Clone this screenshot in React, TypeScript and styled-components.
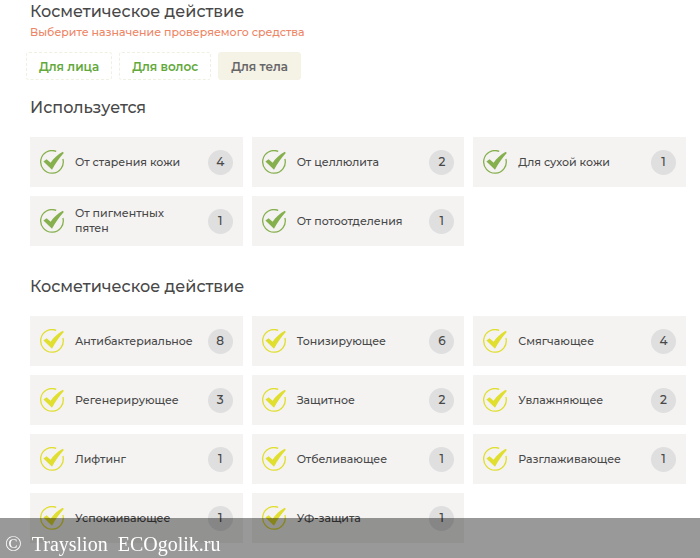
import React from "react";
import styled, { createGlobalStyle } from "styled-components";

const GlobalStyle = createGlobalStyle`
  * { box-sizing: border-box; }
  body {
    margin: 0;
    background: #fff;
    color: #484848;
    font-family: Montserrat, Inter, sans-serif;
  }
`;

const Page = styled.main`
  padding: 0 14px 14px 30px;
`;

const Heading = styled.h2`
  margin: 0;
  font-size: 16px;
  line-height: 24px;
  font-weight: 500;
`;

const Hint = styled.p`
  margin: 0;
  font-size: 11px;
  line-height: 16px;
  font-weight: 500;
  color: #ee8565;
`;

const Tabs = styled.div`
  display: flex;
  gap: 7px;
  margin: 12px 0 16px -4px;
`;

const Tab = styled.button<{ $active?: boolean }>`
  height: 28px;
  padding: 0 12px;
  border: 1px ${(p) => (p.$active ? "solid #f5f2e6" : "dashed #edf1e2")};
  border-radius: 3px;
  background: ${(p) => (p.$active ? "#f5f2e6" : "#fff")};
  color: ${(p) => (p.$active ? "#666" : "#62a83a")};
  font-family: inherit;
  font-size: 12px;
  font-weight: 600;
  cursor: pointer;
`;

const Section = styled.section`
  & + & {
    margin-top: 29px;
  }
`;

const Grid = styled.ul`
  display: grid;
  grid-template-columns: repeat(3, minmax(0, 1fr));
  grid-auto-rows: minmax(50px, auto);
  gap: 9px;
  margin: 17px 0 0;
  padding: 0;
  list-style: none;
`;

const Card = styled.li`
  display: flex;
  align-items: center;
  padding: 8px 10px;
  background: #f4f3f2;
`;

const Mark = styled.svg`
  flex: none;
  width: 24px;
  height: 24px;
  margin-right: 11px;
`;

const Label = styled.span`
  flex: 1;
  min-width: 0;
  padding-right: 8px;
  font-size: 11px;
  font-weight: 500;
  line-height: 15px;
  white-space: pre-line;
`;

const Count = styled.span`
  flex: none;
  width: 25px;
  height: 25px;
  border-radius: 50%;
  background: #dfdfdf;
  font-size: 12px;
  font-weight: 500;
  line-height: 24px;
  text-align: center;
`;

const Watermark = styled.footer`
  position: fixed;
  left: 0;
  right: 0;
  bottom: 0;
  display: flex;
  align-items: center;
  gap: 10px;
  height: 40px;
  padding: 12px 5px 0;
  background: rgba(0, 0, 0, 0.4);
  color: #fff;
  font-family: "Liberation Serif", serif;
  font-size: 20px;
  white-space: pre;
`;

const CopySign = styled.span`
  font-size: 22px;
`;

type Item = { name: string; count: number };

const usedFor: Item[] = [
  { name: "От старения кожи", count: 4 },
  { name: "От целлюлита", count: 2 },
  { name: "Для сухой кожи", count: 1 },
  { name: "От пигментных\nпятен", count: 1 },
  { name: "От потоотделения", count: 1 },
];

const actions: Item[] = [
  { name: "Антибактериальное", count: 8 },
  { name: "Тонизирующее", count: 6 },
  { name: "Смягчающее", count: 4 },
  { name: "Регенерирующее", count: 3 },
  { name: "Защитное", count: 2 },
  { name: "Увлажняющее", count: 2 },
  { name: "Лифтинг", count: 1 },
  { name: "Отбеливающее", count: 1 },
  { name: "Разглаживающее", count: 1 },
  { name: "Успокаивающее", count: 1 },
  { name: "УФ-защита", count: 1 },
];

const CheckMark = ({ color }: { color: string }) => (
  <Mark viewBox="0 0 24 24" aria-hidden="true">
    <path
      d="M16.2 1.4A11.3 11.3 0 1 0 22.9 9"
      fill="none"
      stroke={color}
      strokeWidth="1.3"
    />
    <path
      d="M3.4 11.6 6.6 9.2 10.6 12.8C13.6 8.2 17.6 4.8 22.8 1.8L23.8 3C19.4 7.8 15.6 13 12 19.8Z"
      fill={color}
    />
  </Mark>
);

const CardList = ({ items, color }: { items: Item[]; color: string }) => (
  <Grid>
    {items.map((item) => (
      <Card key={item.name}>
        <CheckMark color={color} />
        <Label>{item.name}</Label>
        <Count>{item.count}</Count>
      </Card>
    ))}
  </Grid>
);

export default function App() {
  return (
    <>
      <GlobalStyle />
      <Page>
        <Heading as="h1">Косметическое действие</Heading>
        <Hint>Выберите назначение проверяемого средства</Hint>
        <Tabs>
          <Tab type="button">Для лица</Tab>
          <Tab type="button">Для волос</Tab>
          <Tab type="button" $active aria-pressed="true">
            Для тела
          </Tab>
        </Tabs>
        <Section>
          <Heading>Используется</Heading>
          <CardList items={usedFor} color="#86b04e" />
        </Section>
        <Section>
          <Heading>Косметическое действие</Heading>
          <CardList items={actions} color="#e0de2e" />
        </Section>
      </Page>
      <Watermark>
        <CopySign>©</CopySign>
        <span>Trayslion  ECOgolik.ru</span>
      </Watermark>
    </>
  );
}
